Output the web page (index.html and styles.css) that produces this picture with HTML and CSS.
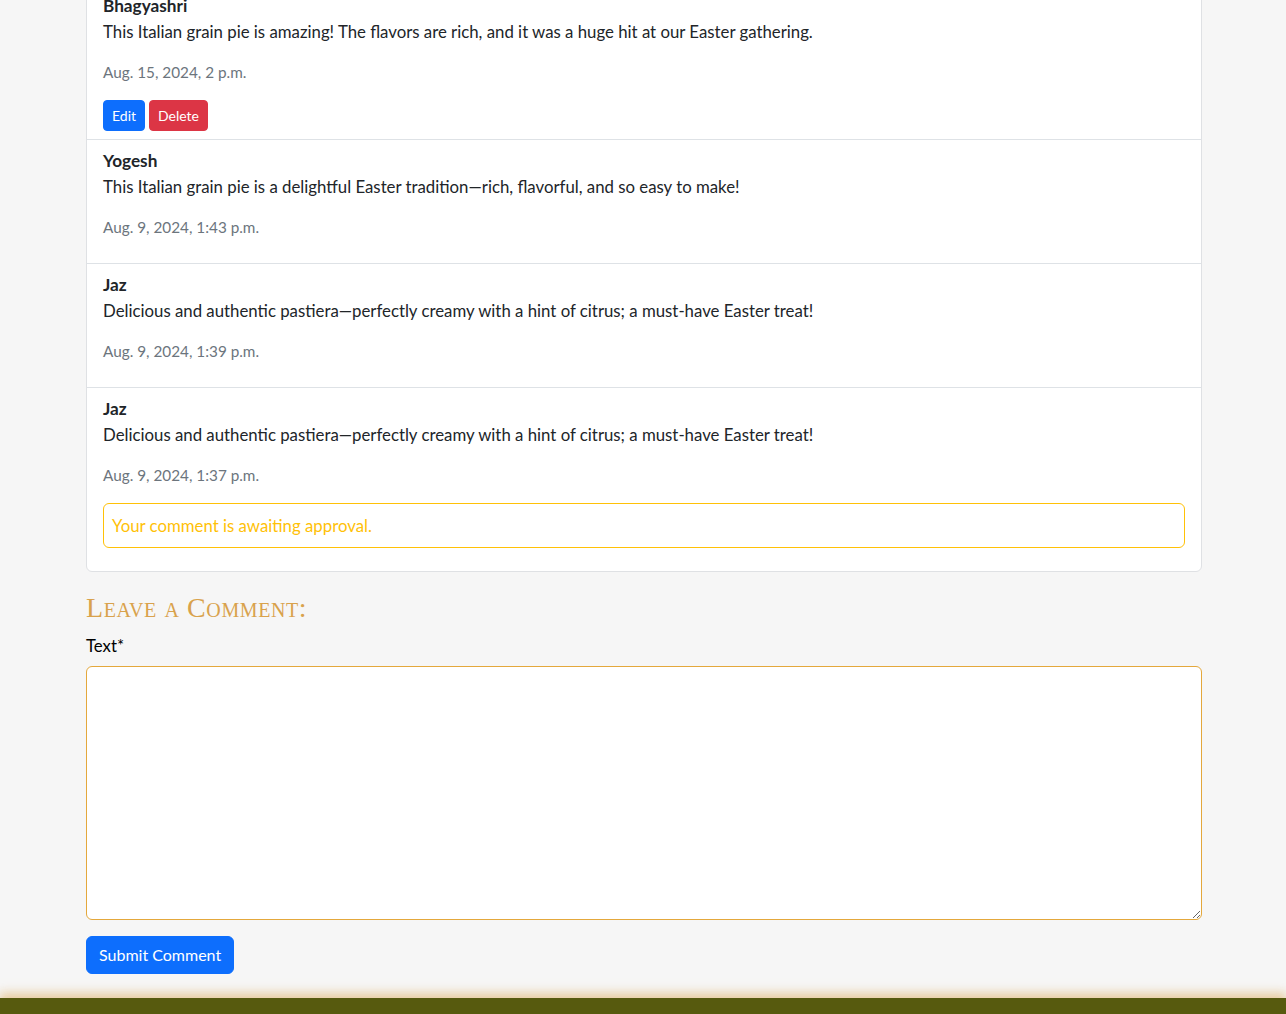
FILE: index.html
```html
<!DOCTYPE html>
<html lang="en">
<head>
<meta charset="utf-8">
<title>Comments</title>
<link rel="stylesheet" href="styles.css">
</head>
<body>
<main class="page">
  <section class="card">
    <div class="comment">
      <p class="author">Bhagyashri</p>
      <p class="body">This Italian grain pie is amazing! The flavors are rich, and it was a huge hit at our Easter gathering.</p>
      <p class="date">Aug. 15, 2024, 2 p.m.</p>
      <div class="actions">
        <button class="btn btn-sm btn-primary">Edit</button>
        <button class="btn btn-sm btn-danger">Delete</button>
      </div>
    </div>
    <div class="comment">
      <p class="author">Yogesh</p>
      <p class="body">This Italian grain pie is a delightful Easter tradition—rich, flavorful, and so easy to make!</p>
      <p class="date">Aug. 9, 2024, 1:43 p.m.</p>
    </div>
    <div class="comment">
      <p class="author">Jaz</p>
      <p class="body">Delicious and authentic pastiera—perfectly creamy with a hint of citrus; a must-have Easter treat!</p>
      <p class="date">Aug. 9, 2024, 1:39 p.m.</p>
    </div>
    <div class="comment">
      <p class="author">Jaz</p>
      <p class="body">Delicious and authentic pastiera—perfectly creamy with a hint of citrus; a must-have Easter treat!</p>
      <p class="date">Aug. 9, 2024, 1:37 p.m.</p>
      <div class="pending">Your comment is awaiting approval.</div>
    </div>
  </section>

  <section class="leave">
    <h3 class="leave-title">Leave a Comment:</h3>
    <form class="comment-form">
      <label class="form-label" for="id_body">Text*</label>
      <textarea id="id_body" class="form-control"></textarea>
      <button type="button" class="btn btn-primary btn-submit">Submit Comment</button>
    </form>
  </section>
</main>
<footer class="footer"></footer>
</body>
</html>
```

FILE: styles.css
```css
* { box-sizing: border-box; }

html, body {
  margin: 0;
  padding: 0;
}

body {
  background: #f6f6f6;
  font-family: Lato, "Open Sans", "Liberation Sans", sans-serif;
  font-size: 16.8px;
  line-height: 1.5;
  color: #212529;
  overflow: hidden;
}

.page {
  width: 1116px;
  margin-left: calc(50% - 557px);
  margin-top: -16px;
}

.card {
  background: #fff;
  border: 1px solid #dfe1e4;
  border-radius: 6px;
}

.comment {
  padding: 8px 16px;
  border-bottom: 1px solid #dee2e6;
}

.comment:last-child {
  border-bottom: none;
  padding-bottom: 23px;
}

.comment p {
  margin: 0;
}

.author {
  font-weight: 700;
  font-size: 17.2px;
}

.comment .date {
  color: #6c757d;
  font-size: 15.3px;
  line-height: 24px;
  margin-top: 16px;
  margin-bottom: 16px;
}

.actions {
  display: flex;
  gap: 4px;
}

.btn {
  font-family: inherit;
  border: 1px solid transparent;
  color: #fff;
  cursor: pointer;
  display: inline-block;
}

.btn-sm {
  font-size: 14px;
  line-height: 21px;
  padding: 4px 8px;
  border-radius: 4px;
}

.btn-primary {
  background: #0d6efd;
  border-color: #0d6efd;
}

.btn-danger {
  background: #dc3545;
  border-color: #dc3545;
}

.pending {
  padding: 9px 8px;
  border: 1px solid #ffc107;
  border-radius: 6px;
  color: #ffc107;
}

.leave {
  padding-top: 19px;
  padding-bottom: 24px;
}

.leave-title {
  margin: 0 0 8px;
  font-family: "Liberation Serif", "DejaVu Serif", serif;
  font-variant: small-caps;
  font-weight: 400;
  font-size: 28px;
  line-height: 33.6px;
  color: #d9a24c;
  letter-spacing: 0.6px;
}

.comment-form {
  display: flex;
  flex-direction: column;
  align-items: flex-start;
}

.form-label {
  display: block;
  margin-bottom: 8px;
  color: #000;
}

.form-control {
  display: block;
  width: 100%;
  height: 254px;
  padding: 6px 12px;
  font-family: inherit;
  font-size: 16px;
  border: 1px solid #e4a83c;
  border-radius: 6px;
  background: #fff;
  resize: vertical;
}

.btn-submit {
  margin-top: 16px;
  font-size: 16px;
  line-height: 24px;
  padding: 6px 12px;
  border-radius: 6px;
}

.footer {
  height: 40px;
  background: #575a0e;
  box-shadow: 0 -4px 10px 1px rgba(228, 190, 128, 0.75);
}
```
